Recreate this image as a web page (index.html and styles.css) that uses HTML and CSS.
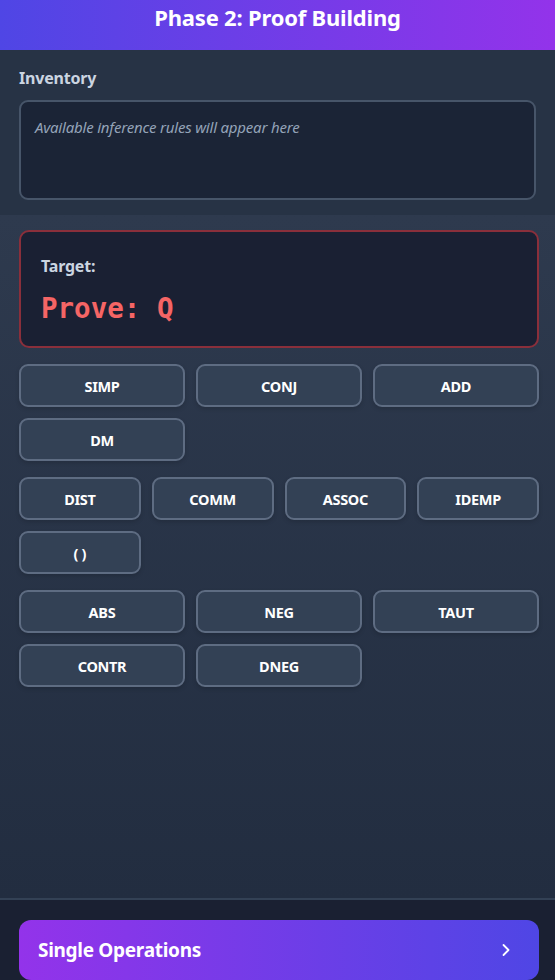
FILE: index.html
```html
<!DOCTYPE html>
<html>
<head>
<meta charset="utf-8">
<link rel="stylesheet" href="styles.css">
</head>
<body>
<div class="app">
  <header class="topbar">
    <h1 class="title">Phase 2: Proof Building</h1>
  </header>
  <section class="inventory">
    <div class="inv-label">Inventory</div>
    <div class="inv-box"><span class="inv-placeholder">Available inference rules will appear here</span></div>
  </section>
  <main class="main">
    <div class="target">
      <div class="target-label">Target:</div>
      <div class="target-expr">Prove: Q</div>
    </div>
    <div class="group cols-3">
      <button class="rule">SIMP</button>
      <button class="rule">CONJ</button>
      <button class="rule">ADD</button>
      <button class="rule">DM</button>
    </div>
    <div class="group cols-4">
      <button class="rule">DIST</button>
      <button class="rule">COMM</button>
      <button class="rule">ASSOC</button>
      <button class="rule">IDEMP</button>
      <button class="rule">( )</button>
    </div>
    <div class="group cols-3">
      <button class="rule">ABS</button>
      <button class="rule">NEG</button>
      <button class="rule">TAUT</button>
      <button class="rule">CONTR</button>
      <button class="rule">DNEG</button>
    </div>
  </main>
  <footer class="footer">
    <button class="ops">
      <span class="ops-text">Single Operations</span>
      <svg class="chev" width="14" height="14" viewBox="0 0 14 14"><path d="M4.5 2 L9.5 7 L4.5 12" fill="none" stroke="#ffffff" stroke-width="1.8" stroke-linecap="round" stroke-linejoin="round"/></svg>
    </button>
  </footer>
</div>
</body>
</html>
```
FILE: styles.css
```css
* { box-sizing: border-box; }
html, body { margin: 0; padding: 0; }
body {
  width: 555px;
  height: 980px;
  overflow: hidden;
  background: #1a2233;
  font-family: "Noto Sans", "Open Sans", sans-serif;
  color: #fff;
}
.app { display: flex; flex-direction: column; height: 980px; }
.topbar {
  height: 50px;
  flex: none;
  background: linear-gradient(90deg, #4f46e5 0%, #9333ea 100%);
  display: flex;
  justify-content: center;
  padding-top: 1px;
}
.title {
  margin: 0;
  font-size: 22px;
  line-height: 32px;
  font-weight: 700;
  letter-spacing: -0.2px;
}
.inventory {
  flex: none;
  height: 165px;
  background: #273345;
  padding: 17px 19px 0;
}
.inv-label {
  font-size: 16px;
  font-weight: 700;
  color: #cbd5e1;
  line-height: 22px;
  letter-spacing: -0.2px;
}
.inv-box {
  margin-top: 11px;
  height: 100px;
  background: #1b2436;
  border: 2px solid #475569;
  border-radius: 9px;
  padding: 14px 14px;
}
.inv-placeholder {
  font-style: italic;
  font-size: 15px;
  color: #94a3b8;
  letter-spacing: -0.2px;
}
.main {
  flex: none;
  height: 683px;
  background: linear-gradient(180deg, #2e3a4e 0%, #222d40 100%);
  padding: 15px 16px 0 19px;
  display: flex;
  flex-direction: column;
  gap: 16px;
}
.target {
  height: 118px;
  background: #1a2033;
  border: 2px solid #8a2f3b;
  border-radius: 10px;
  padding: 23px 20px;
  width: 520px;
}
.target-label {
  font-size: 16px;
  font-weight: 700;
  color: #cbd5e1;
  line-height: 22px;
  letter-spacing: -0.2px;
}
.target-expr {
  margin-top: 14px;
  font-family: "DejaVu Sans Mono", "Liberation Mono", monospace;
  font-weight: 700;
  font-size: 27.5px;
  line-height: 34px;
  color: #f56565;
}
.group {
  display: grid;
  gap: 11px 11px;
  width: 520px;
}
.cols-3 { grid-template-columns: repeat(3, 1fr); }
.cols-4 { grid-template-columns: repeat(4, 1fr); }
.rule {
  height: 43px;
  background: #334155;
  border: 2px solid #5e6c82;
  border-radius: 9px;
  color: #fff;
  font-family: "Noto Sans", "Open Sans", sans-serif;
  font-size: 14.5px;
  font-weight: 700;
  letter-spacing: -0.3px;
  box-shadow: 0 2px 4px rgba(0,0,0,0.15);
}
.footer {
  flex: none;
  border-top: 2px solid #334155;
  background: #1a2032;
  padding: 20px 16px 20px 19px;
}
.ops {
  width: 520px;
  height: 60px;
  border: none;
  border-radius: 12px;
  background: linear-gradient(90deg, #9333ea 0%, #4f46e5 100%);
  display: flex;
  align-items: center;
  justify-content: space-between;
  padding: 0 26px 0 19px;
  color: #fff;
}
.ops-text {
  font-family: "Noto Sans", "Open Sans", sans-serif;
  font-size: 19px;
  font-weight: 700;
  letter-spacing: -0.3px;
}
.chev { display: block; }
```
